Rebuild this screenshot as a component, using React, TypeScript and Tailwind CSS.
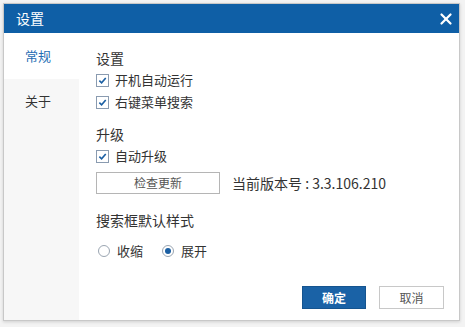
import { X } from "lucide-react";

const Check = ({ label }: { label: string }) => (
  <label className="flex items-center gap-[6px] h-[22px]">
    <span className="w-[13px] h-[13px] border border-[#8a9bb0] bg-white flex items-center justify-center">
      <svg viewBox="0 0 10 10" className="w-[9px] h-[9px]">
        <path d="M1.5 5.2 L4 7.6 L8.6 2.2" fill="none" stroke="#1b5fa3" strokeWidth="1.8" />
      </svg>
    </span>
    <span>{label}</span>
  </label>
);

const Radio = ({ label, checked }: { label: string; checked?: boolean }) => (
  <label className="flex items-center gap-[7px]">
    <span className="w-[12px] h-[12px] rounded-full border border-[#9aa5b1] bg-white flex items-center justify-center">
      {checked && <span className="w-[6px] h-[6px] rounded-full bg-[#1b5fa3]" />}
    </span>
    <span>{label}</span>
  </label>
);

const App = () => {
  return (
    <div
      className="w-[465px] h-[327px] bg-[#f3f3f3] p-[3px] pb-[6px] pr-[5px] text-[13px] text-[#333]"
      style={{ fontFamily: '"Noto Sans CJK SC", "Liberation Sans", sans-serif' }}
    >
      <div className="w-full h-full bg-white border border-[#c8c8c8] flex flex-col shadow-[0_1px_3px_rgba(0,0,0,0.15)]">
        <div className="h-[29px] bg-[#0f5fa6] flex items-center justify-between pl-[12px] pr-[4px] text-white">
          <span className="text-[14px]">设置</span>
          <X className="w-[18px] h-[18px]" strokeWidth={3} />
        </div>
        <div className="flex flex-1">
          <div className="w-[75px] bg-[#f7f7f7] flex flex-col">
            <div className="h-[46px] bg-white flex items-center pl-[21px] text-[#1f6db3]">常规</div>
            <div className="h-[44px] flex items-center pl-[21px]">关于</div>
          </div>
          <div className="flex-1 flex flex-col pl-[17px] pt-[15px] pr-[15px] pb-[11px]">
            <div className="text-[14px] h-[20px] leading-[20px]">设置</div>
            <div className="flex flex-col mt-[1px]">
              <Check label="开机自动运行" />
              <Check label="右键菜单搜索" />
            </div>
            <div className="text-[14px] h-[20px] leading-[20px] mt-[11px]">升级</div>
            <div className="mt-[1px]">
              <Check label="自动升级" />
            </div>
            <div className="flex items-center gap-[12px] mt-[5px]">
              <button className="w-[124px] h-[22px] border border-[#b5b5b5] bg-white text-[#555] text-[12px]">检查更新</button>
              <span className="text-[14px]">当前版本号 : 3.3.106.210</span>
            </div>
            <div className="text-[14px] h-[20px] leading-[20px] mt-[16px]">搜索框默认样式</div>
            <div className="flex items-center gap-[19px] mt-[11px] pl-[2px]">
              <Radio label="收缩" />
              <Radio label="展开" checked />
            </div>
            <div className="flex-1" />
            <div className="flex justify-end gap-[13px]">
              <button className="w-[64px] h-[23px] bg-[#1a62a6] text-white font-bold text-[12px] border border-[#15548f]">确定</button>
              <button className="w-[65px] h-[23px] bg-white text-[#555] text-[12px] border border-[#c8c8c8]">取消</button>
            </div>
          </div>
        </div>
      </div>
    </div>
  );
};

export default App;
